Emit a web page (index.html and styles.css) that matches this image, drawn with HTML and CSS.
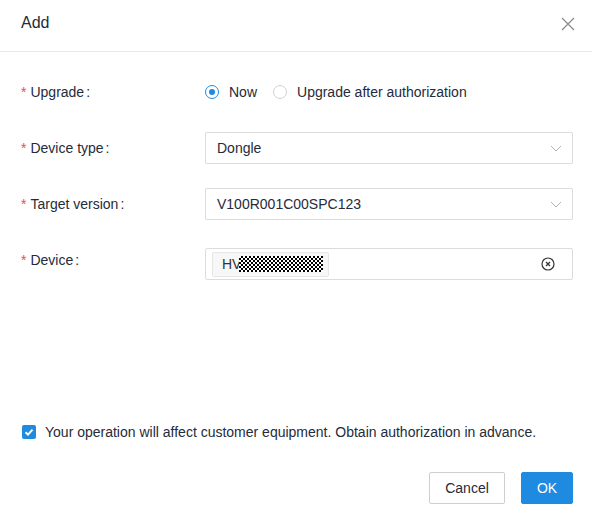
FILE: index.html
```html
<!DOCTYPE html>
<html>
<head>
<meta charset="utf-8">
<link rel="stylesheet" href="styles.css">
</head>
<body>
<div class="dialog">
  <div class="header">
    <span class="title">Add</span>
    <svg class="close" width="14" height="14" viewBox="0 0 14 14"><path d="M1 1L13 13M13 1L1 13" stroke="#8a8a8a" stroke-width="1.2" fill="none"/></svg>
  </div>
  <div class="body">
    <div class="row row-radio">
      <div class="label"><span class="req">*</span>Upgrade<span class="colon">:</span></div>
      <div class="control radios">
        <span class="radio checked"></span><span class="rtext">Now</span>
        <span class="radio"></span><span class="rtext">Upgrade after authorization</span>
      </div>
    </div>
    <div class="row">
      <div class="label"><span class="req">*</span>Device type<span class="colon">:</span></div>
      <div class="control select">
        <span>Dongle</span>
        <svg class="chev" width="12" height="7" viewBox="0 0 12 7"><path d="M1 1L6 6L11 1" stroke="#b0b0b0" stroke-width="1" fill="none"/></svg>
      </div>
    </div>
    <div class="row">
      <div class="label"><span class="req">*</span>Target version<span class="colon">:</span></div>
      <div class="control select">
        <span>V100R001C00SPC123</span>
        <svg class="chev" width="12" height="7" viewBox="0 0 12 7"><path d="M1 1L6 6L11 1" stroke="#b0b0b0" stroke-width="1" fill="none"/></svg>
      </div>
    </div>
    <div class="row row-device">
      <div class="label"><span class="req">*</span>Device<span class="colon">:</span></div>
      <div class="control multi">
        <span class="tag">HV<span class="mask"></span></span>
        <svg class="clear" width="14" height="14" viewBox="0 0 14 14"><circle cx="7" cy="7" r="6" stroke="#333" stroke-width="1.2" fill="none"/><path d="M5 5L9 9M9 5L5 9" stroke="#333" stroke-width="1.2"/></svg>
      </div>
    </div>
  </div>
  <div class="notice">
    <span class="checkbox"><svg width="14" height="14" viewBox="0 0 14 14"><path d="M3.5 7.2L6 9.6L10.5 4.6" stroke="#fff" stroke-width="2" fill="none"/></svg></span>
    <span>Your operation will affect customer equipment. Obtain authorization in advance.</span>
  </div>
  <div class="footer">
    <button class="btn cancel">Cancel</button>
    <button class="btn ok">OK</button>
  </div>
</div>
</body>
</html>
```
FILE: styles.css
```css
html, body {
  margin: 0;
  padding: 0;
  background: #fff;
}
body {
  font-family: "Liberation Sans", Arial, sans-serif;
  font-size: 14px;
  color: #252b3a;
}
.dialog {
  width: 592px;
  height: 526px;
  background: #fff;
  display: flex;
  flex-direction: column;
}
.header {
  height: 51px;
  border-bottom: 1px solid #e8e8e8;
  display: flex;
  align-items: center;
  justify-content: space-between;
  padding: 0 17px 0 21px;
}
.title {
  font-size: 16px;
  color: #252b3a;
  margin-top: -6px;
}
.close {
  margin-top: -4px;
}
.body {
  padding: 24px 19px 0 21px;
  flex: 1;
}
.row {
  display: flex;
  align-items: center;
  margin-bottom: 24px;
}
.row-device {
  align-items: flex-start;
  padding-top: 4px;
}
.label {
  width: 184px;
  flex: none;
  line-height: 32px;
  color: #252b3a;
}
.row-device .label {
  line-height: 24px;
}
.req {
  color: #f04a4a;
  margin-right: 4px;
}
.colon {
  margin-left: 2px;
}
.control {
  flex: 1;
  height: 32px;
  box-sizing: border-box;
}
.radios {
  display: flex;
  align-items: center;
}
.radio {
  width: 14px;
  height: 14px;
  box-sizing: border-box;
  border: 1px solid #d0d0d0;
  border-radius: 50%;
  position: relative;
  margin-right: 10px;
}
.radio.checked {
  border-color: #1e8ae0;
}
.radio.checked::after {
  content: "";
  position: absolute;
  left: 3px;
  top: 3px;
  width: 6px;
  height: 6px;
  border-radius: 50%;
  background: #1e8ae0;
}
.rtext {
  margin-right: 16px;
}
.select {
  border: 1px solid #dcdcdc;
  border-radius: 2px;
  display: flex;
  align-items: center;
  justify-content: space-between;
  padding: 0 10px 0 11px;
}
.multi {
  border: 1px solid #dcdcdc;
  border-radius: 2px;
  display: flex;
  align-items: center;
  justify-content: space-between;
  padding: 0 17px 0 6px;
}
.tag {
  height: 25px;
  box-sizing: border-box;
  border: 1px solid #e6e6e6;
  background: #f7f7f7;
  border-radius: 2px;
  display: flex;
  align-items: center;
  padding: 0 5px 0 9px;
  color: #333;
}
.mask {
  display: inline-block;
  width: 84px;
  height: 16px;
  margin-left: -2px;
  background: repeating-conic-gradient(#000 0 25%, #fff 0 50%) 0 0 / 4px 4px;
}
.notice {
  display: flex;
  align-items: center;
  padding: 0 21px 0 22px;
  height: 16px;
  margin-bottom: 32px;
  color: #252b3a;
}
.checkbox {
  width: 14px;
  height: 14px;
  background: #1e8ae0;
  border-radius: 2px;
  display: inline-flex;
  margin-right: 9px;
}
.footer {
  display: flex;
  justify-content: flex-end;
  gap: 16px;
  padding: 0 19px 22px 0;
}
.btn {
  font-family: "Liberation Sans", Arial, sans-serif;
  font-size: 14px;
  height: 32px;
  border-radius: 2px;
  padding: 0;
  cursor: pointer;
}
.cancel {
  width: 76px;
  background: #fff;
  border: 1px solid #cfcfcf;
  color: #252b3a;
}
.ok {
  width: 52px;
  background: #1e8ae0;
  border: 1px solid #1e8ae0;
  color: #fff;
}
```
